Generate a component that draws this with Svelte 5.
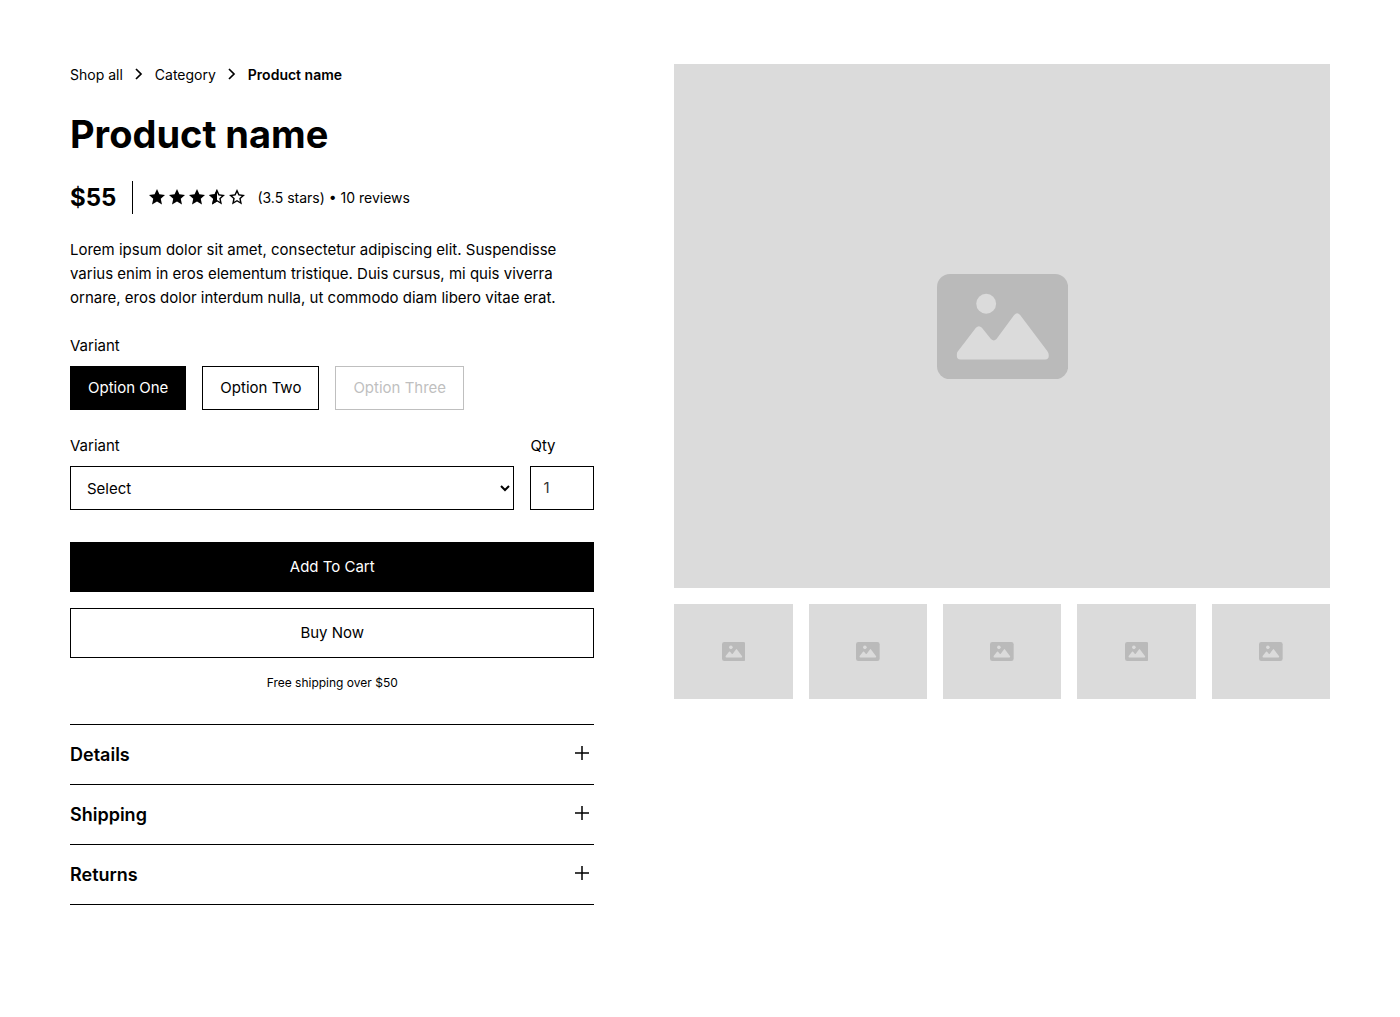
<script>
  const options = [
    { name: 'Option One', state: 'selected' },
    { name: 'Option Two', state: '' },
    { name: 'Option Three', state: 'disabled' }
  ];
  const sections = ['Details', 'Shipping', 'Returns'];
  const stars = ['full', 'full', 'full', 'half', 'empty'];
  const thumbs = [1, 2, 3, 4, 5];
  let quantity = $state(1);
</script>

{#snippet chevron()}
  <svg class="chevron" viewBox="0 0 16 16" aria-hidden="true">
    <path d="M5 3l5 5-5 5" fill="none" stroke="currentColor" stroke-width="1.7" />
  </svg>
{/snippet}

{#snippet placeholder()}
  <svg class="picture" viewBox="0 0 132 106" aria-hidden="true">
    <rect width="132" height="106" rx="13" fill="#bababa" />
    <circle cx="49.5" cy="30" r="10" fill="#dbdbdb" />
    <path
      d="M20.5 78.5L39.2 54.2q3-3.4 6 0L54.3 65.5q2.8 3 5.6 0L77.7 41.3q3-3.4 6 0L111 77.5q1.5 2 1.5 4v1q0 3.5-3.5 3.5H23.5q-3.5 0-3.5-3.5v-1.5q0-1.5.5-2.5z"
      fill="#dbdbdb"
    />
  </svg>
{/snippet}

<main class="product">
  <section class="info">
    <nav class="crumbs" aria-label="Breadcrumb">
      <a href="#shop">Shop all</a>
      {@render chevron()}
      <a href="#category">Category</a>
      {@render chevron()}
      <a class="current" href="#product" aria-current="page">Product name</a>
    </nav>

    <h1>Product name</h1>

    <div class="summary">
      <p class="price">$55</p>
      <div class="rating">
        <div class="stars" role="img" aria-label="3.5 out of 5 stars">
          {#each stars as star}
            <svg class="star" viewBox="0 0 20 20" aria-hidden="true">
              {#if star === 'full'}
                <path d="M10 0l3 6.7 7 .7-5.300 4.900L16.200 19.500 10 15.700 3.800 19.500l1.500-7.200L0 7.400l7-.7z" />
              {:else}
                <path
                  fill-rule="evenodd"
                  d="M10 0l3 6.7 7 .7-5.300 4.900L16.200 19.500 10 15.700 3.800 19.500l1.500-7.200L0 7.400l7-.7zM10 4.300L8.200 8.200l-4.100.5 3.100 2.900-.8 4.200L10 13.600l3.600 2.200-.8-4.200 3.100-2.900-4.100-.5z"
                />
                {#if star === 'half'}
                  <path d="M10 0v15.700L3.800 19.500l1.500-7.200L0 7.400l7-.7z" />
                {/if}
              {/if}
            </svg>
          {/each}
        </div>
        <span class="reviews">(3.5 stars) • 10 reviews</span>
      </div>
    </div>

    <p class="description">
      Lorem ipsum dolor sit amet, consectetur adipiscing elit. Suspendisse varius enim in eros
      elementum tristique. Duis cursus, mi quis viverra ornare, eros dolor interdum nulla, ut
      commodo diam libero vitae erat.
    </p>

    <form onsubmit={(event) => event.preventDefault()}>
      <div class="field">
        <span class="label" id="options-label">Variant</span>
        <div class="options" role="group" aria-labelledby="options-label">
          {#each options as option}
            <button
              type="button"
              class="option {option.state}"
              aria-pressed={option.state === 'selected'}
              disabled={option.state === 'disabled'}>{option.name}</button>
          {/each}
        </div>
      </div>

      <div class="choices">
        <div class="field">
          <label class="label" for="variant">Variant</label>
          <select id="variant">
            <option>Select</option>
            <option>Option One</option>
            <option>Option Two</option>
          </select>
        </div>
        <div class="field">
          <label class="label" for="quantity">Qty</label>
          <input id="quantity" type="number" min="1" bind:value={quantity} />
        </div>
      </div>

      <div class="actions">
        <button type="submit" class="action primary">Add To Cart</button>
        <button type="button" class="action">Buy Now</button>
      </div>
      <p class="shipping">Free shipping over $50</p>
    </form>

    <div class="accordion">
      {#each sections as section}
        <h2>
          <button type="button" class="toggle" aria-expanded="false">
            <span>{section}</span>
            <svg class="plus" viewBox="0 0 24 24" aria-hidden="true">
              <path d="M12 5v14M5 12h14" fill="none" stroke="currentColor" stroke-width="1.5" />
            </svg>
          </button>
        </h2>
      {/each}
    </div>
  </section>

  <section class="gallery" aria-label="Product images">
    <div class="frame">{@render placeholder()}</div>
    <div class="thumbs">
      {#each thumbs as thumb}
        <button type="button" class="frame" aria-label="Show image {thumb}">
          {@render placeholder()}
        </button>
      {/each}
    </div>
  </section>
</main>

<style>
  :global(body) {
    background: #fff;
  }

  .product {
    box-sizing: border-box;
    display: grid;
    grid-template-columns: 1fr 1.25fr;
    align-items: start;
    gap: 80px;
    padding: 64px 5%;
    color: #000;
    font-family: Inter, 'Liberation Sans', sans-serif;
    font-size: 15px;
    line-height: 24px;
  }

  h1,
  h2,
  p {
    margin: 0;
  }

  button,
  select,
  input {
    box-sizing: border-box;
    margin: 0;
    border: 1px solid #000;
    border-radius: 0;
    background: #fff;
    color: #000;
    font: inherit;
  }

  .crumbs {
    display: flex;
    align-items: center;
    gap: 8px;
    margin-bottom: 24px;
    font-size: 14px;
    line-height: 21px;
  }

  .crumbs a {
    color: inherit;
    text-decoration: none;
  }

  .crumbs .current {
    font-weight: 600;
  }

  .chevron {
    width: 16px;
    height: 16px;
    margin-bottom: 2px;
  }

  h1 {
    margin-bottom: 22px;
    font-size: 38px;
    font-weight: 700;
    line-height: 50px;
  }

  .summary {
    display: flex;
    align-items: center;
    margin-bottom: 24px;
  }

  .price {
    padding-right: 16px;
    border-right: 1px solid #000;
    font-size: 24px;
    font-weight: 700;
    line-height: 33px;
  }

  .rating {
    display: flex;
    align-items: center;
    gap: 12px;
    padding-left: 16px;
  }

  .stars {
    display: flex;
    gap: 4px;
    padding-bottom: 2px;
  }

  .star {
    width: 16px;
    height: 16px;
    fill: currentColor;
  }

  .reviews {
    font-size: 14px;
    line-height: 21px;
  }

  .description {
    margin-bottom: 24px;
  }

  .field {
    display: grid;
    gap: 8px;
  }

  .options {
    display: flex;
    flex-wrap: wrap;
    gap: 16px;
  }

  .option {
    padding: 9px 17px;
  }

  .option.selected {
    background: #000;
    color: #fff;
  }

  .option.disabled {
    border-color: #bfbfbf;
    color: #bfbfbf;
  }

  .choices {
    display: grid;
    grid-template-columns: 1fr 64px;
    gap: 16px;
    margin: 24px 0 32px;
  }

  select,
  input {
    width: 100%;
    height: 44px;
    padding: 0 12px;
  }

  input {
    padding-bottom: 2px;
    color: #333;
  }

  .actions {
    display: grid;
    gap: 16px;
    margin-bottom: 16px;
  }

  .action {
    padding: 12px 24px;
  }

  .primary {
    background: #000;
    color: #fff;
  }

  .shipping {
    font-size: 12px;
    line-height: 18px;
    text-align: center;
  }

  .accordion {
    margin-top: 32px;
    border-top: 1px solid #000;
  }

  .toggle {
    display: flex;
    justify-content: space-between;
    align-items: center;
    width: 100%;
    padding: 16px 0;
    border-width: 0 0 1px;
    font-size: 18px;
    font-weight: 600;
    line-height: 27px;
  }

  .plus {
    width: 24px;
    height: 24px;
    margin-bottom: 3px;
  }

  .gallery {
    display: grid;
    gap: 16px;
  }

  .frame {
    display: flex;
    align-items: center;
    justify-content: center;
    aspect-ratio: 5 / 4;
    padding: 0;
    border: 0;
    background: #dbdbdb;
  }

  .picture {
    width: 20%;
  }

  .thumbs {
    display: grid;
    grid-template-columns: repeat(5, 1fr);
    gap: 16px;
  }
</style>
